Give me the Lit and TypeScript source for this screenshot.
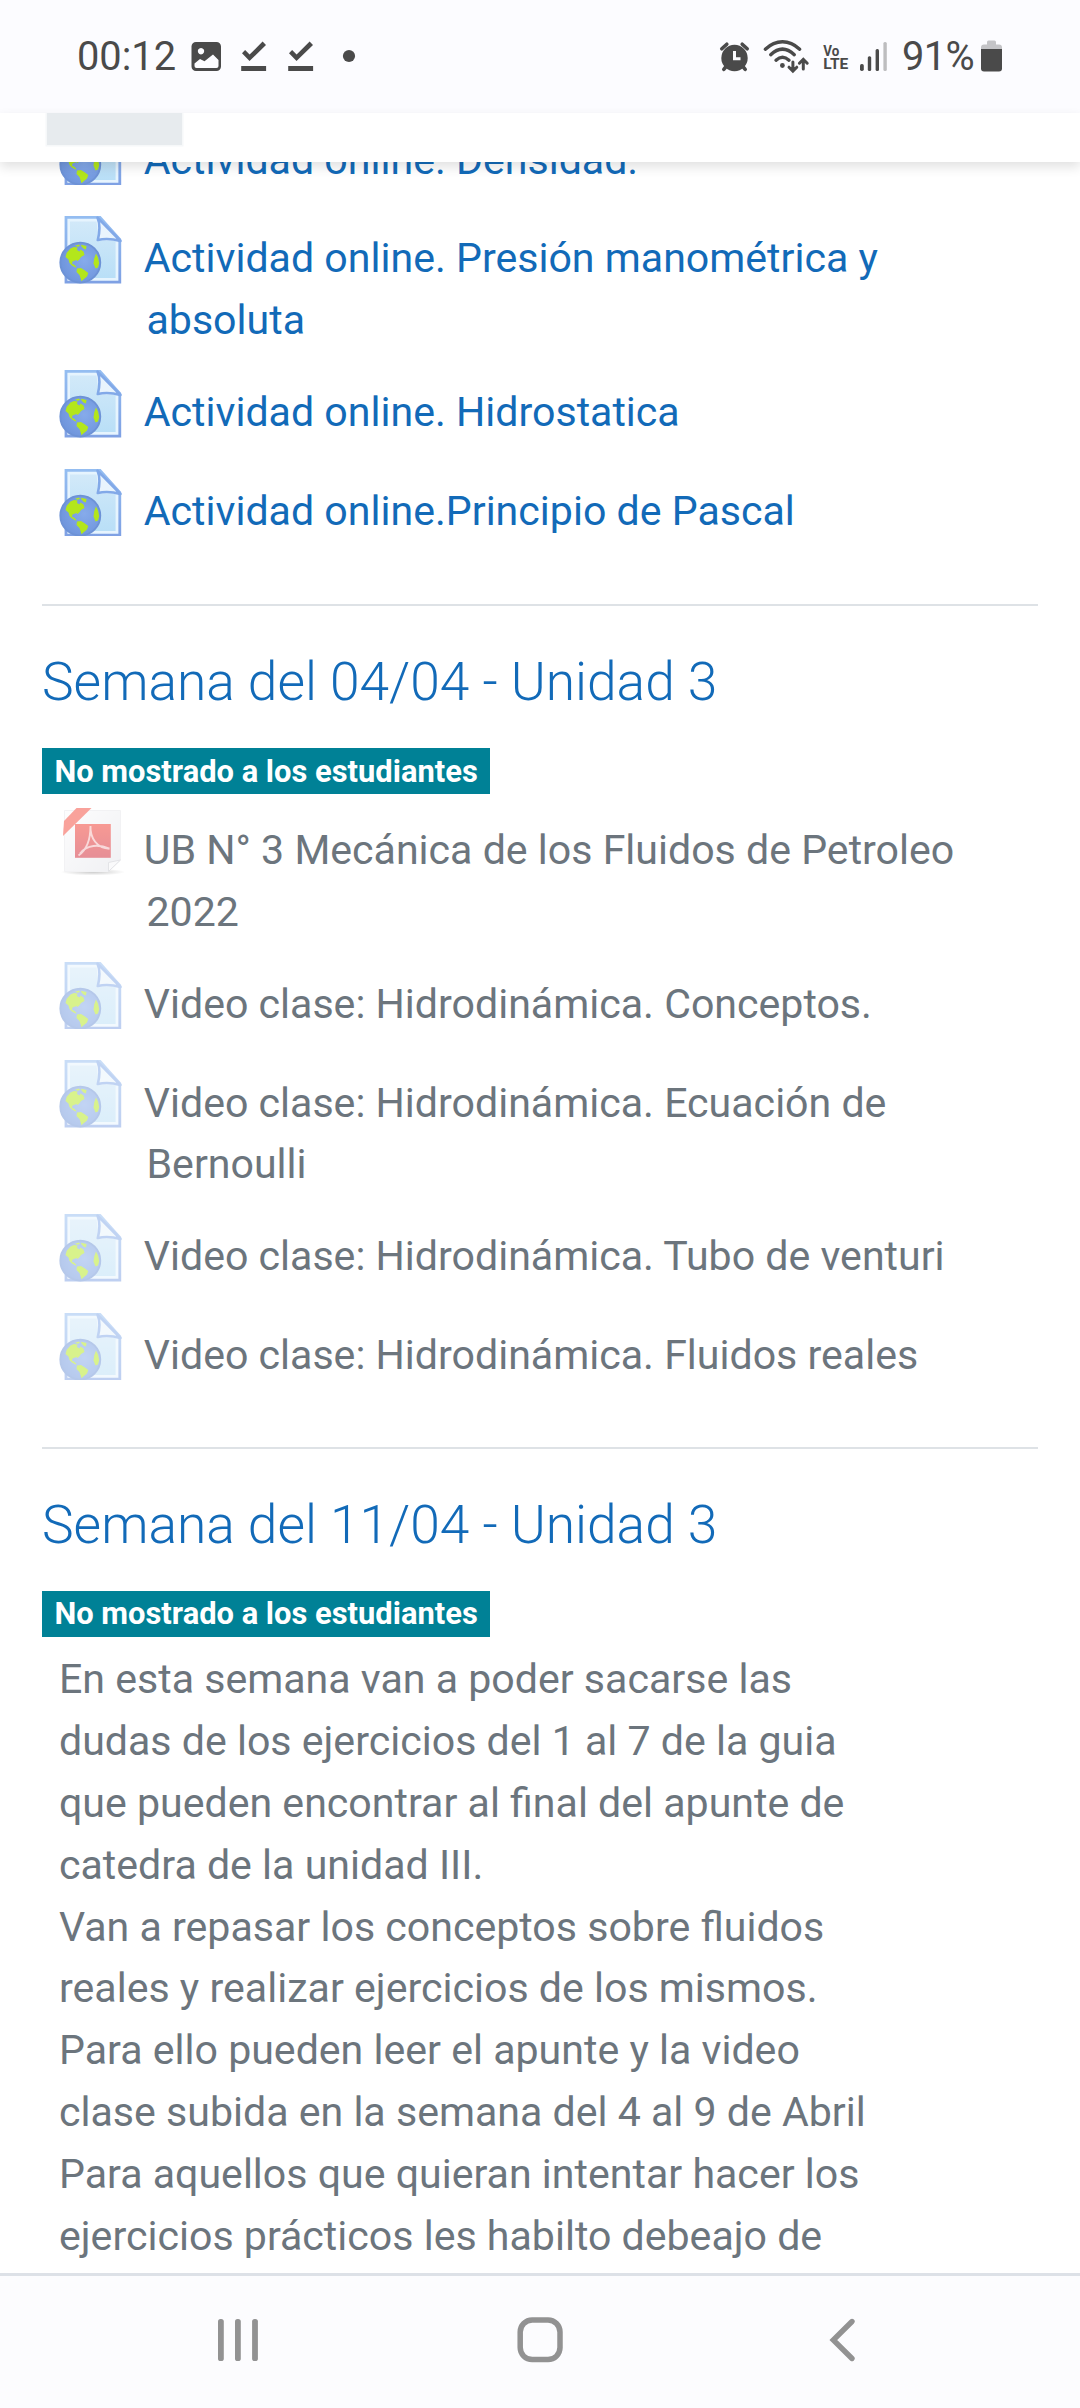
import { LitElement, html, css, svg, nothing } from "lit";
import { customElement, property } from "lit/decorators.js";

type Kind = "url" | "pdf";
interface Activity {
  kind: Kind;
  lines: string[];
}

const ACTIVITIES: Activity[] = [
  { kind: "url", lines: ["Actividad online. Densidad."] },
  { kind: "url", lines: ["Actividad online. Presión manométrica y", "absoluta"] },
  { kind: "url", lines: ["Actividad online. Hidrostatica"] },
  { kind: "url", lines: ["Actividad online.Principio de Pascal"] },
];

const HIDDEN_ACTIVITIES: Activity[] = [
  { kind: "pdf", lines: ["UB N° 3 Mecánica de los Fluidos de Petroleo", "2022"] },
  { kind: "url", lines: ["Video clase: Hidrodinámica. Conceptos."] },
  { kind: "url", lines: ["Video clase: Hidrodinámica. Ecuación de", "Bernoulli"] },
  { kind: "url", lines: ["Video clase: Hidrodinámica. Tubo de venturi"] },
  { kind: "url", lines: ["Video clase: Hidrodinámica. Fluidos reales"] },
];

const SUMMARY = [
  "En esta semana van a poder sacarse las",
  "dudas de los ejercicios del 1 al 7 de la guia",
  "que pueden encontrar al final del apunte de",
  "catedra de la unidad III.",
  "Van a repasar los conceptos sobre fluidos",
  "reales y realizar ejercicios de los mismos.",
  "Para ello pueden leer el apunte y la video",
  "clase subida en la semana del 4 al 9 de Abril",
  "Para aquellos que quieran intentar hacer los",
  "ejercicios prácticos les habilto debeajo de",
];

const urlIcon = svg`
  <defs>
    <linearGradient id="sheet" x1="0" y1="0" x2="0" y2="1">
      <stop offset="0" stop-color="#d2e9f9"/><stop offset="1" stop-color="#b9dff7"/>
    </linearGradient>
    <linearGradient id="edge" x1="0" y1="0" x2="0" y2="1">
      <stop offset="0" stop-color="#94bdf1"/><stop offset="1" stop-color="#7fa1e4"/>
    </linearGradient>
    <radialGradient id="sea" cx=".6" cy=".45" r=".6">
      <stop offset="0" stop-color="#86abeb"/><stop offset="1" stop-color="#6f95dc"/>
    </radialGradient>
  </defs>
  <path d="M7 1.4H41L60.8 23.5V66.2H7Z" fill="#e6f4fe" stroke="url(#edge)" stroke-width="2.800"/>
  <path d="M11 5.5H37.5L40 24.5H56.6V62H11Z" fill="url(#sheet)"/>
  <path d="M38.5 1.6C41.3 8 41 15 38.8 24C46 22.300 53 22.600 61.500 25Z" fill="#e9f4fd" stroke="#82a9e8" stroke-width="2.600" stroke-linejoin="round"/>
  <circle cx="21.300" cy="46.600" r="20" fill="url(#sea)" stroke="#6d92d6" stroke-width="1.800"/>
  <g fill="#b3e61c">
    <path d="M6.500 41L7.700 36.700L11.500 32.500L15 31L18.500 31.500L18 34L20.500 35.500L21.500 33.500L24.500 35.500L25.500 39L22 41L20.300 43.500L18.500 45L17.500 44L13.500 45.500L13 48L15 48.500L17.500 51L16.500 51.500L13 49.500L10.500 47L9.500 43.500Z"/>
    <path d="M16 29.800L20 28.500L21 30L18.500 30.800ZM22 28.800L27.500 30L27 33.500L24.500 32.500L22.500 30.500Z"/>
    <path d="M18 52.500L22 52L26 54.500L29.300 57L28 60.500L25 63L22.500 65.300L21.500 62L20.500 59L17.500 56Z"/>
    <path d="M37 37.500L39 41.500L40.200 47L39 51.500L36.500 52.500L34.500 47.500L35.200 42.500Z"/>
  </g>`;

const pdfIcon = svg`
  <defs>
    <linearGradient id="paper" x1="0" y1="0" x2="1" y2="1">
      <stop offset="0" stop-color="#fcfcfd"/><stop offset="1" stop-color="#e2e3e9"/>
    </linearGradient>
    <linearGradient id="tile" x1="0" y1="0" x2="0" y2="1">
      <stop offset="0" stop-color="#f1362a"/><stop offset="1" stop-color="#cf2030"/>
    </linearGradient>
    <radialGradient id="shade"><stop offset="0" stop-color="#999"/><stop offset="1" stop-color="#999" stop-opacity="0"/></radialGradient>
  </defs>
  <ellipse cx="34" cy="64" rx="32" ry="3.500" fill="url(#shade)"/>
  <path d="M5.500 2.500H61.500V52L49.500 63.500H5.500Z" fill="url(#paper)" stroke="#e6e7eb" stroke-width="1"/>
  <path d="M61.500 52L49.500 63.500V54.500Z" fill="#f6f6f8" stroke="#c9cad1" stroke-width="1"/>
  <path d="M5 13L17.500 0H32.500L4 28Z" fill="#f4473a"/>
  <rect x="16" y="16" width="35.800" height="33.800" fill="url(#tile)"/>
  <path d="M19.500 47.500C26 43 31.500 34 31.500 18M31.500 18C31 30 38 40.500 50.500 40.700M21 45.500C28 36.500 40 36 50.500 40.700" fill="none" stroke="#fff" stroke-opacity=".65" stroke-width="1.900"/>`;

@customElement("activity-row")
export class ActivityRow extends LitElement {
  @property({ attribute: false }) item!: Activity;
  @property({ type: Boolean, reflect: true }) dimmed = false;

  static styles = css`
    :host { display: flex; min-height: 98.700px; box-sizing: border-box; padding: 12.300px 0 17.900px 17px; color: #126ab8; }
    :host([dimmed]) { color: #6c757d; }
    .icon { flex: none; width: 67.600px; height: 67.600px; margin-top: -12.300px; margin-bottom: -17.500px; overflow: hidden; }
    :host([dimmed]) .icon { opacity: 0.5; }
    .name { margin-left: 19.900px; text-indent: -2.700px; white-space: nowrap; }
    .line { display: block; }
    .line + .line { text-indent: 0; }
  `;

  render() {
    return html`
      <svg class="icon" viewBox="0 0 67.6 67.6">${this.item.kind === "pdf" ? pdfIcon : urlIcon}</svg>
      <div class="name">${this.item.lines.map((l) => html`<span class="line">${l}</span>`)}</div>
    `;
  }
}

@customElement("course-section")
export class CourseSection extends LitElement {
  @property() heading = "";
  @property({ attribute: false }) items: Activity[] = [];
  @property({ attribute: false }) summary: string[] = [];

  static styles = css`
    :host { display: block; border-top: 2px solid #dee2e6; padding-top: 44.700px; }
    .heading { margin: 0; height: 62px; line-height: 62px; font-size: 53.300px; font-weight: 300; color: #126ab8; white-space: nowrap; }
    .badge { display: block; width: max-content; margin-top: 35.300px; padding: 7.700px 12.400px; font-size: 30.900px; line-height: 31px; font-weight: 700; color: #fff; background: #008196; white-space: nowrap; }
    .rows { margin-top: 13.600px; padding-bottom: 35.300px; }
    .summary { margin: 12.200px 0 0 17px; color: #6c757d; white-space: nowrap; }
    .line { display: block; }
  `;

  render() {
    return html`
      <h3 class="heading">${this.heading}</h3>
      <span class="badge">No mostrado a los estudiantes</span>
      ${this.items.length
        ? html`<div class="rows">${this.items.map((i) => html`<activity-row .item=${i} dimmed></activity-row>`)}</div>`
        : nothing}
      ${this.summary.length
        ? html`<p class="summary">${this.summary.map((l) => html`<span class="line">${l}</span>`)}</p>`
        : nothing}
    `;
  }
}

@customElement("status-bar")
export class StatusBar extends LitElement {
  static styles = css`
    :host { display: flex; align-items: flex-start; height: 113px; box-sizing: border-box; padding: 33px 77px 0 77px; background: #fcfcff; color: #4a4a4a; font-size: 39.800px; line-height: 47px; }
    .time { width: 114px; }
    svg { display: block; height: 47px; flex: none; }
    .right { margin-left: auto; display: flex; }
    .pct { width: 78px; letter-spacing: -0.600px; }
  `;

  render() {
    return html`
      <span class="time">00:12</span>
      <svg width="165" height="47" viewBox="191 33 165 47" fill="#4a4a4a">
        <path fill-rule="evenodd" d="M196 42h20.500a4.500 4.500 0 0 1 4.500 4.500v20a4.500 4.500 0 0 1-4.500 4.500h-20.500a4.500 4.500 0 0 1-4.500-4.500v-20a4.500 4.500 0 0 1 4.500-4.500ZM201 48a3.200 3.200 0 1 0 .01 0ZM194.500 63.500l5.500-4.500 4.500 2.300 8.500-6.800 5.500 5.500v6q0 2-2 2h-20q-2 0-2-2Z"/>
        <g><path d="M242 53.200l3.100-3.200 4.500 4.500 13-12.900 3.400 3.500-16.500 16z"/><rect x="241.200" y="66" width="24.900" height="5"/></g>
        <g transform="translate(47 0)"><path d="M242 53.200l3.100-3.200 4.500 4.500 13-12.900 3.400 3.500-16.500 16z"/><rect x="241.200" y="66" width="24.900" height="5"/></g>
        <circle cx="349" cy="56" r="6.100"/>
      </svg>
      <div class="right">
        <svg width="183" height="47" viewBox="720 33 183 47" fill="#4a4a4a">
          <circle cx="735.500" cy="58" r="13.200"/>
          <path d="M722.800 48.800l5-4.600M748.200 48.800l-5-4.600M727.500 66l-2.700 3.300M743.500 66l2.700 3.300" stroke="#4a4a4a" stroke-width="3.600" stroke-linecap="round"/>
          <path d="M735.500 51v7.700h6" fill="none" stroke="#fcfcff" stroke-width="3"/>
          <g fill="none" stroke="#4a4a4a" stroke-width="3.400" stroke-linecap="round">
            <path d="M766.300 49.200C777 39.300 790 39.300 800.700 49.200"/>
            <path d="M771.700 54.700C779.500 47.300 787.500 47.300 795.300 54.700"/>
            <path d="M777 60.200C781.500 56 785.500 56 790 60.200"/>
            <path d="M793.900 62v8.500M790 67.200l3.900 3.900 3.900-3.900M804.300 69v-8.500M800.400 63.200l3.900-3.900 3.900 3.900" stroke-width="3"/>
          </g>
          <circle cx="783.400" cy="65.500" r="2.400"/>
          <text x="824.300" y="55.800" font-size="15" font-weight="700" textLength="16" lengthAdjust="spacingAndGlyphs">Vo</text>
          <text x="824.300" y="69" font-size="15" font-weight="700" textLength="25" lengthAdjust="spacingAndGlyphs">LTE</text>
          <rect x="861" y="64" width="3.800" height="7" rx="1.700"/>
          <rect x="868.800" y="56.300" width="3.400" height="14.700" rx="1.500"/>
          <rect x="876.600" y="49" width="3.400" height="22" rx="1.500"/>
          <rect x="884.400" y="42" width="3.400" height="29" rx="1.500" fill="#bdbdbf"/>
        </svg>
        <span class="pct">91%</span>
        <svg width="23" height="47" viewBox="981 33 23 47">
          <path d="M982 49v-1.500a3 3 0 0 1 3-3h3v-2.500q0-1.500 1.500-1.500h6q1.500 0 1.500 1.500v2.500h3a3 3 0 0 1 3 3v1.500z" fill="#c4c4c7"/>
          <path d="M982 49h21v19.500a3 3 0 0 1-3 3h-15a3 3 0 0 1-3-3z" fill="#4a4a4a"/>
        </svg>
      </div>
    `;
  }
}

@customElement("nav-keys")
export class NavKeys extends LitElement {
  static styles = css`
    :host { display: flex; height: 135px; box-sizing: border-box; border-top: 3px solid #dde1e7; padding: 37px 206px 0; justify-content: space-between; background: #fcfcfe; }
    svg { display: block; }
  `;

  render() {
    return html`
      <svg width="64" height="54" viewBox="206 2313 64 54" fill="#929292">
        <rect x="218" y="2319" width="5.800" height="42" rx="2.600"/>
        <rect x="235" y="2319" width="5.800" height="42" rx="2.600"/>
        <rect x="252.100" y="2319" width="5.800" height="42" rx="2.600"/>
      </svg>
      <svg width="64" height="54" viewBox="508 2313 64 54">
        <rect x="520.200" y="2320" width="39.800" height="39.600" rx="12" fill="none" stroke="#929292" stroke-width="5.500"/>
      </svg>
      <svg width="64" height="54" viewBox="810 2313 64 54">
        <path d="M852 2321.500L833.300 2340L852 2358.500" fill="none" stroke="#929292" stroke-width="5.400" stroke-linecap="round"/>
      </svg>
    `;
  }
}

@customElement("app-root")
export class AppRoot extends LitElement {
  static styles = css`
    :host { display: flex; flex-direction: column; width: 1080px; height: 2408px; overflow: hidden; background: #fff; font-family: Roboto, "Noto Sans", sans-serif; font-size: 41.100px; line-height: 61.800px; }
    status-bar, nav-keys, .header { flex: none; }
    .header { height: 49px; background: #fff; box-shadow: 0 5px 11px rgba(0, 0, 0, 0.12); z-index: 1; padding-left: 47px; }
    .placeholder { width: 135px; height: 32px; background: #e7ebee; box-shadow: 0 0 0 1.500px #f6f8f9; clip-path: inset(0 -2px -2px -2px); }
    .page { flex: 1; min-height: 0; overflow: hidden; padding: 0 42px; }
    .current { margin-top: -44.500px; padding-bottom: 36.600px; }
  `;

  render() {
    return html`
      <status-bar></status-bar>
      <div class="header"><div class="placeholder"></div></div>
      <main class="page">
        <div class="current">${ACTIVITIES.map((i) => html`<activity-row .item=${i}></activity-row>`)}</div>
        <course-section heading="Semana del 04/04 - Unidad 3" .items=${HIDDEN_ACTIVITIES}></course-section>
        <course-section heading="Semana del 11/04 - Unidad 3" .summary=${SUMMARY}></course-section>
      </main>
      <nav-keys></nav-keys>
    `;
  }
}
